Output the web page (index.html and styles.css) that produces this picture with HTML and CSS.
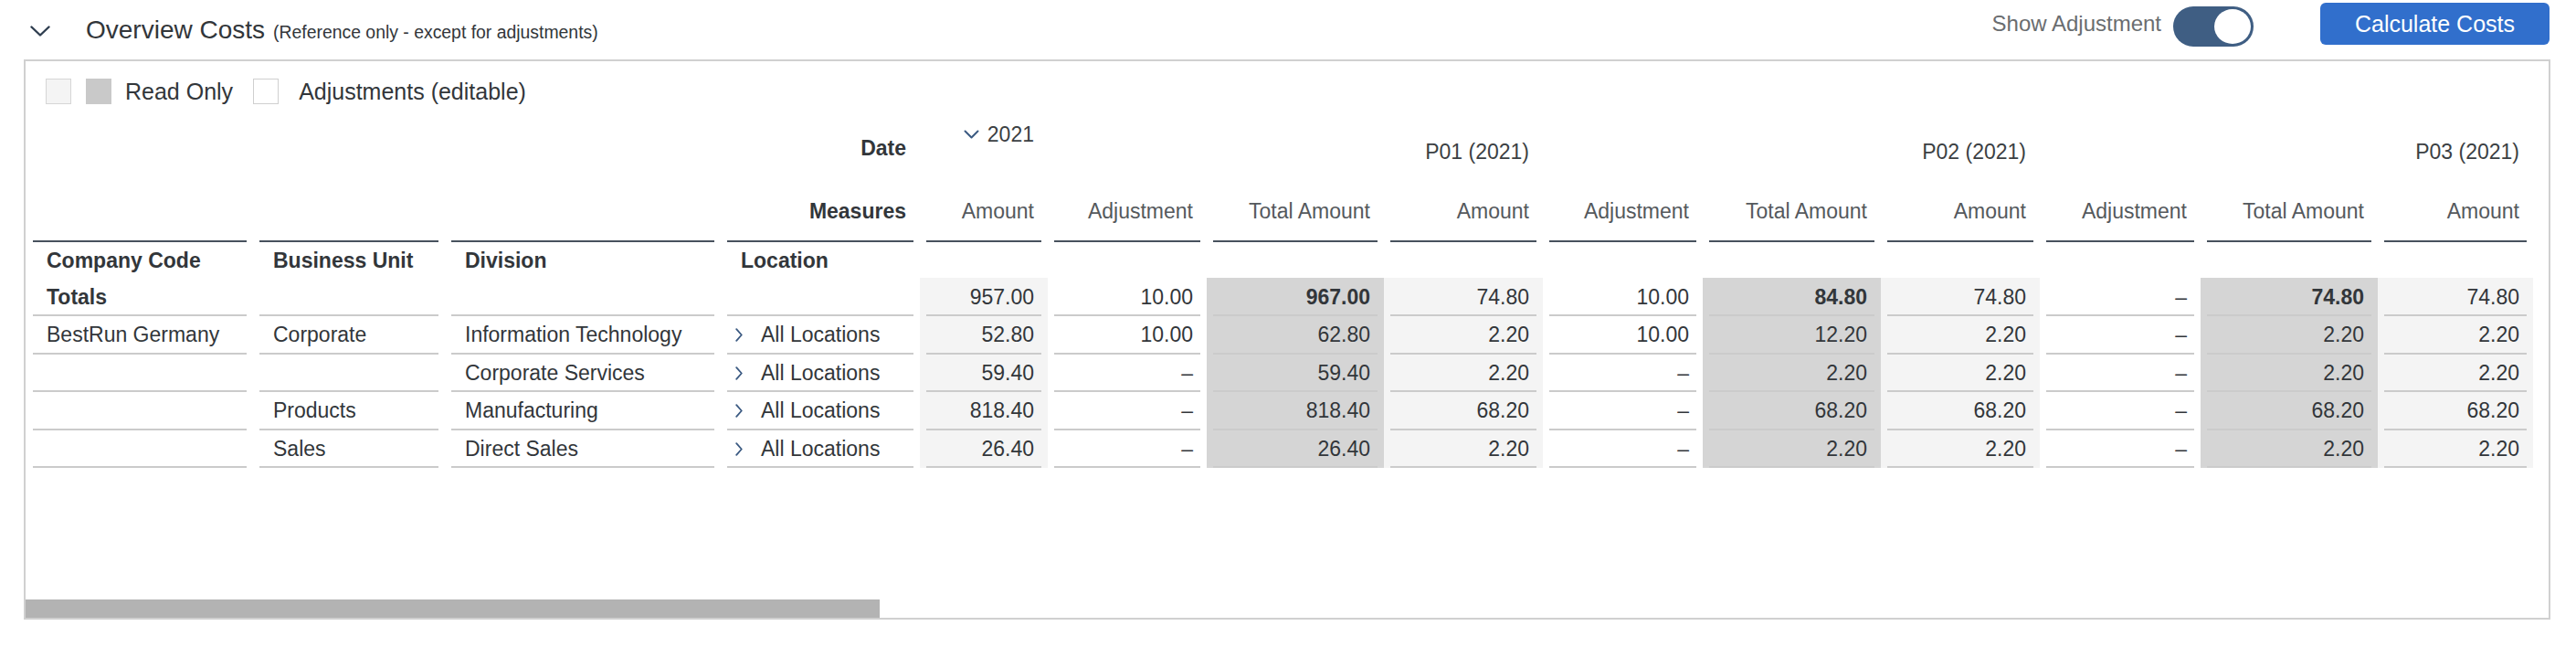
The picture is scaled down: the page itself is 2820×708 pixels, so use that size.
FILE: index.html
```html
<!DOCTYPE html>
<html lang="en">
<head>
<meta charset="utf-8">
<title>Overview Costs</title>
<link rel="stylesheet" href="styles.css">
</head>
<body>
<div class="page">
  <header class="header">
    <div class="title-group">
      <svg class="collapse" width="22" height="12" viewBox="0 0 22 12"><polyline points="1.5,1.5 11,10.5 20.5,1.5" fill="none" stroke="#2f3e50" stroke-width="2.4" stroke-linecap="round" stroke-linejoin="round"/></svg>
      <h1 class="title">Overview Costs</h1>
      <span class="subtitle">(Reference only - except for adjustments)</span>
    </div>
    <div class="actions">
      <span class="switch-label">Show Adjustment</span>
      <span class="switch"><span class="knob"></span></span>
      <button class="btn" type="button">Calculate Costs</button>
    </div>
  </header>

  <section class="panel">
    <div class="legend">
      <span class="sw light"></span>
      <span class="sw dark"></span>
      <span class="legend-text">Read Only</span>
      <span class="sw white"></span>
      <span class="legend-text wide">Adjustments (editable)</span>
    </div>

    <div class="grid">
      <!-- Date row -->
      <div class="c"></div><div class="c"></div><div class="c"></div>
      <div class="c"><div class="in r b datel">Date</div></div>
      <div class="c"><div class="in r yr"><svg class="yr-chev" width="17" height="10" viewBox="0 0 17 10"><polyline points="1.5,1.5 8.5,8.5 15.5,1.5" fill="none" stroke="#3b5a82" stroke-width="2" stroke-linecap="round" stroke-linejoin="round"/></svg>2021</div></div>
      <div class="c"></div><div class="c"></div>
      <div class="c"><div class="in r per">P01 (2021)</div></div>
      <div class="c"></div><div class="c"></div>
      <div class="c"><div class="in r per">P02 (2021)</div></div>
      <div class="c"></div><div class="c"></div>
      <div class="c"><div class="in r per">P03 (2021)</div></div>

      <!-- Measures row -->
      <div class="c"><div class="in hd"></div></div>
      <div class="c"><div class="in hd"></div></div>
      <div class="c"><div class="in hd"></div></div>
      <div class="c"><div class="in hd r b">Measures</div></div>
      <div class="c"><div class="in hd r mh">Amount</div></div>
      <div class="c"><div class="in hd r mh">Adjustment</div></div>
      <div class="c"><div class="in hd r mh">Total Amount</div></div>
      <div class="c"><div class="in hd r mh">Amount</div></div>
      <div class="c"><div class="in hd r mh">Adjustment</div></div>
      <div class="c"><div class="in hd r mh">Total Amount</div></div>
      <div class="c"><div class="in hd r mh">Amount</div></div>
      <div class="c"><div class="in hd r mh">Adjustment</div></div>
      <div class="c"><div class="in hd r mh">Total Amount</div></div>
      <div class="c"><div class="in hd r mh">Amount</div></div>

      <!-- Dimension header row -->
      <div class="c"><div class="in l b dh">Company Code</div></div>
      <div class="c"><div class="in l b dh">Business Unit</div></div>
      <div class="c"><div class="in l b dh">Division</div></div>
      <div class="c"><div class="in l b dh loc-h">Location</div></div>
      <div class="c"></div><div class="c"></div><div class="c"></div><div class="c"></div><div class="c"></div>
      <div class="c"></div><div class="c"></div><div class="c"></div><div class="c"></div><div class="c"></div>

      <!-- Totals row -->
      <div class="c"><div class="in l ln b">Totals</div></div>
      <div class="c"><div class="in ln"></div></div>
      <div class="c"><div class="in ln"></div></div>
      <div class="c"><div class="in ln"></div></div>
      <div class="c a"><div class="in r ln">957.00</div></div>
      <div class="c"><div class="in r ln">10.00</div></div>
      <div class="c t"><div class="in r ln b">967.00</div></div>
      <div class="c a"><div class="in r ln">74.80</div></div>
      <div class="c"><div class="in r ln">10.00</div></div>
      <div class="c t"><div class="in r ln b">84.80</div></div>
      <div class="c a"><div class="in r ln">74.80</div></div>
      <div class="c"><div class="in r ln">–</div></div>
      <div class="c t"><div class="in r ln b">74.80</div></div>
      <div class="c a"><div class="in r ln">74.80</div></div>

      <!-- Row 1 -->
      <div class="c"><div class="in l ln">BestRun Germany</div></div>
      <div class="c"><div class="in l ln">Corporate</div></div>
      <div class="c"><div class="in l ln">Information Technology</div></div>
      <div class="c"><div class="in ln loc"><svg class="loc-chev" width="8" height="15" viewBox="0 0 8 15"><polyline points="1.2,1.2 6.8,7.5 1.2,13.8" fill="none" stroke="#3b5a82" stroke-width="1.8" stroke-linecap="round" stroke-linejoin="round"/></svg>All Locations</div></div>
      <div class="c a"><div class="in r ln">52.80</div></div>
      <div class="c"><div class="in r ln">10.00</div></div>
      <div class="c t"><div class="in r ln">62.80</div></div>
      <div class="c a"><div class="in r ln">2.20</div></div>
      <div class="c"><div class="in r ln">10.00</div></div>
      <div class="c t"><div class="in r ln">12.20</div></div>
      <div class="c a"><div class="in r ln">2.20</div></div>
      <div class="c"><div class="in r ln">–</div></div>
      <div class="c t"><div class="in r ln">2.20</div></div>
      <div class="c a"><div class="in r ln">2.20</div></div>

      <!-- Row 2 -->
      <div class="c"><div class="in l ln"></div></div>
      <div class="c"><div class="in l ln"></div></div>
      <div class="c"><div class="in l ln">Corporate Services</div></div>
      <div class="c"><div class="in ln loc"><svg class="loc-chev" width="8" height="15" viewBox="0 0 8 15"><polyline points="1.2,1.2 6.8,7.5 1.2,13.8" fill="none" stroke="#3b5a82" stroke-width="1.8" stroke-linecap="round" stroke-linejoin="round"/></svg>All Locations</div></div>
      <div class="c a"><div class="in r ln">59.40</div></div>
      <div class="c"><div class="in r ln">–</div></div>
      <div class="c t"><div class="in r ln">59.40</div></div>
      <div class="c a"><div class="in r ln">2.20</div></div>
      <div class="c"><div class="in r ln">–</div></div>
      <div class="c t"><div class="in r ln">2.20</div></div>
      <div class="c a"><div class="in r ln">2.20</div></div>
      <div class="c"><div class="in r ln">–</div></div>
      <div class="c t"><div class="in r ln">2.20</div></div>
      <div class="c a"><div class="in r ln">2.20</div></div>

      <!-- Row 3 -->
      <div class="c"><div class="in l ln"></div></div>
      <div class="c"><div class="in l ln">Products</div></div>
      <div class="c"><div class="in l ln">Manufacturing</div></div>
      <div class="c"><div class="in ln loc"><svg class="loc-chev" width="8" height="15" viewBox="0 0 8 15"><polyline points="1.2,1.2 6.8,7.5 1.2,13.8" fill="none" stroke="#3b5a82" stroke-width="1.8" stroke-linecap="round" stroke-linejoin="round"/></svg>All Locations</div></div>
      <div class="c a"><div class="in r ln">818.40</div></div>
      <div class="c"><div class="in r ln">–</div></div>
      <div class="c t"><div class="in r ln">818.40</div></div>
      <div class="c a"><div class="in r ln">68.20</div></div>
      <div class="c"><div class="in r ln">–</div></div>
      <div class="c t"><div class="in r ln">68.20</div></div>
      <div class="c a"><div class="in r ln">68.20</div></div>
      <div class="c"><div class="in r ln">–</div></div>
      <div class="c t"><div class="in r ln">68.20</div></div>
      <div class="c a"><div class="in r ln">68.20</div></div>

      <!-- Row 4 -->
      <div class="c"><div class="in l ln"></div></div>
      <div class="c"><div class="in l ln">Sales</div></div>
      <div class="c"><div class="in l ln">Direct Sales</div></div>
      <div class="c"><div class="in ln loc"><svg class="loc-chev" width="8" height="15" viewBox="0 0 8 15"><polyline points="1.2,1.2 6.8,7.5 1.2,13.8" fill="none" stroke="#3b5a82" stroke-width="1.8" stroke-linecap="round" stroke-linejoin="round"/></svg>All Locations</div></div>
      <div class="c a"><div class="in r ln">26.40</div></div>
      <div class="c"><div class="in r ln">–</div></div>
      <div class="c t"><div class="in r ln">26.40</div></div>
      <div class="c a"><div class="in r ln">2.20</div></div>
      <div class="c"><div class="in r ln">–</div></div>
      <div class="c t"><div class="in r ln">2.20</div></div>
      <div class="c a"><div class="in r ln">2.20</div></div>
      <div class="c"><div class="in r ln">–</div></div>
      <div class="c t"><div class="in r ln">2.20</div></div>
      <div class="c a"><div class="in r ln">2.20</div></div>
    </div>

    <div class="scroll"><div class="thumb"></div></div>
  </section>
</div>
</body>
</html>
```

FILE: styles.css
```css
* { box-sizing: border-box; }

body {
  margin: 0;
  background: #ffffff;
  font-family: "Liberation Sans", Arial, sans-serif;
  color: #32363a;
}

/* Header */
.header {
  display: flex;
  justify-content: space-between;
  height: 65px;
  padding: 0 29px 0 33px;
}

.title-group {
  display: flex;
  align-items: baseline;
  padding-top: 17px;
}

.collapse {
  align-self: flex-start;
  flex: none;
  margin-top: 11px;
  margin-right: 39px;
}

.title {
  margin: 0;
  font-size: 28px;
  font-weight: normal;
  line-height: 32px;
  color: #32363a;
}

.subtitle {
  margin-left: 9px;
  font-size: 19.4px;
  color: #32363a;
}

.actions {
  display: flex;
  align-items: center;
  height: 46px;
  margin-top: 3px;
}

.switch-label {
  font-size: 24px;
  color: #6a6d70;
  margin-right: 13px;
}

.switch {
  display: flex;
  justify-content: flex-end;
  align-items: center;
  width: 88px;
  height: 44px;
  margin-top: 5px;
  padding: 0 3px;
  border-radius: 22px;
  background: #3f5e83;
}

.knob {
  width: 40px;
  height: 38px;
  border-radius: 50%;
  background: #ffffff;
}

.btn {
  margin-left: 73px;
  width: 251px;
  height: 46px;
  border: 0;
  border-radius: 6px;
  background: #316fcc;
  color: #ffffff;
  font-family: inherit;
  font-size: 25px;
}

/* Panel */
.panel {
  display: flex;
  flex-direction: column;
  margin-left: 26px;
  width: 2766px;
  height: 613px;
  border: 2px solid #d0d0d0;
}

.legend {
  display: flex;
  align-items: center;
  height: 28px;
  margin: 19px 0 0 22px;
  font-size: 25px;
  color: #32363a;
}

.sw {
  flex: none;
  width: 28px;
  height: 28px;
  border: 1px solid #d6d6d6;
}
.sw.light { background: #f4f4f4; }
.sw.dark { background: #c9c9c9; border-color: #c9c9c9; margin-left: 16px; }
.sw.white { background: #ffffff; border-color: #cfcfcf; margin-left: 22px; }

.legend-text { margin-left: 15px; }
.legend-text.wide { margin-left: 22px; }

/* Grid table */
.grid {
  display: grid;
  grid-template-columns: 248px 210px 302px 218px 140px 174px 194px 174px 175px 195px 174px 176px 194px 170px;
  grid-template-rows: 70px 65px 39px 42px repeat(4, 41.5px);
  margin: 16px 0 0 1px;
  font-size: 23px;
  color: #32363a;
}

.c {
  min-width: 0;
  padding: 0 7px;
}

.in {
  display: flex;
  align-items: center;
  height: 100%;
  white-space: nowrap;
}

.in.r { justify-content: flex-end; padding-right: 8px; }
.in.l { padding-left: 15px; }
.loc-h { padding-left: 16px; }

.ln { border-bottom: 2px solid #cbcbcb; padding-top: 2px; }
.hd { border-bottom: 2px solid #48525e; }
.dh { padding-top: 1px; }

.a { background: #f4f4f4; }
.t { background: #d5d5d5; }
.b { font-weight: bold; }

.mh { color: #55595d; }

.datel { padding-bottom: 6px; }

.yr {
  align-items: flex-start;
  padding-top: 4px;
  color: #3b3f43;
}
.yr-chev { flex: none; margin: 8px 9px 0 0; }

.per { padding-top: 2px; color: #3b3f43; }

.loc { padding-left: 9px; }
.loc-chev { flex: none; margin-right: 20px; }

/* Horizontal scrollbar */
.scroll {
  margin-top: auto;
  height: 20px;
}
.thumb {
  width: 935px;
  height: 20px;
  background: #b3b3b3;
}
```
